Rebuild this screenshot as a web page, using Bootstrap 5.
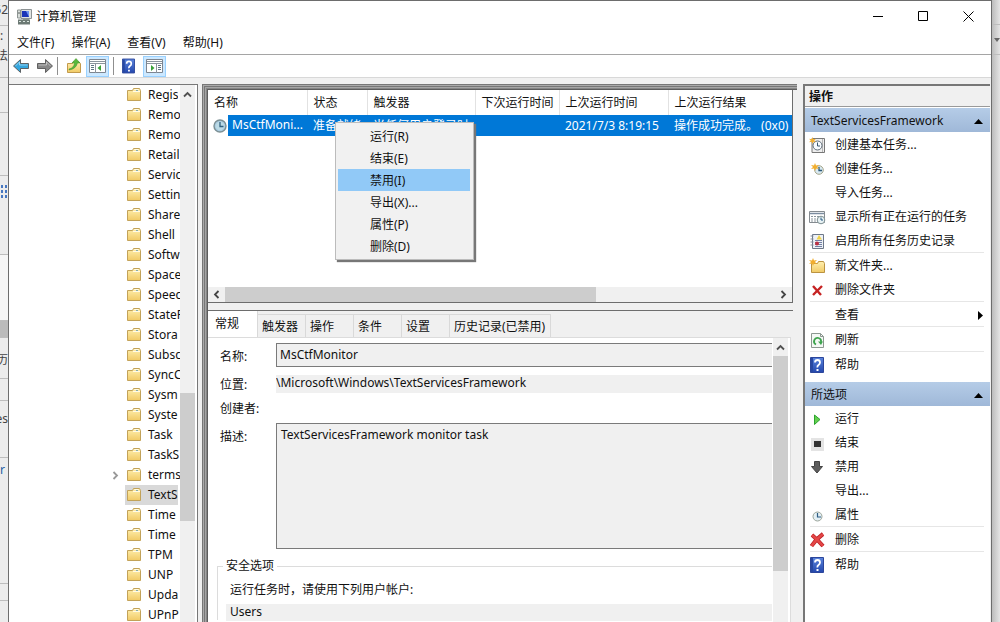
<!DOCTYPE html>
<html lang="zh-CN">
<head>
<meta charset="utf-8">
<meta name="viewport" content="width=device-width, initial-scale=1">
<title>计算机管理</title>
<link href="https://cdn.jsdelivr.net/npm/bootstrap@5.3.0/dist/css/bootstrap.min.css" rel="stylesheet">
<style>
  body { font-family: "Noto Sans", "Noto Sans CJK SC", sans-serif; font-size: 12px; line-height: 20px; color: #111; background: #e9e9e9; }
  button, input, textarea { font: inherit; color: inherit; border-radius: 0; }
  button { background: none; border: 0; padding: 0; text-align: left; }
  svg { display: block; flex: none; }
  a { color: inherit; text-decoration: none; }

  .desk-edge { width: 8px; flex: none; background: #ececec; white-space: nowrap; }
  .desk-edge > div { border-bottom: 1px solid #bdbdbd; overflow: hidden; flex: none; color: #444; }
  .desk-right { background: linear-gradient(90deg, #bcbcbc, #e4e4e4); }

  .app-window { background: #fff; border: 1px solid #6d6d6d; border-bottom: 0; min-width: 0; }
  .title-bar { height: 31px; }
  .win-btn { width: 45px; height: 29px; display: grid; place-items: center; }
  .menu-bar { height: 23px; padding-left: 8px; border-bottom: 1px solid #a5a5a5; gap: 17px; line-height: 22px; }
  .tool-bar { height: 23px; border-bottom: 1px solid #d8d8d8; padding-left: 4px; }
  .tool-btn { width: 23px; height: 21px; display: grid; place-items: center; }
  .tool-btn.on { background: #cce8ff; border: 1px solid #99d1ff; }
  .tool-sep { width: 1px; height: 18px; background: #8f8f8f; }
  .work-area { background: #f0f0f0; padding-top: 6px; min-height: 0; }

  .tree-pane { width: 189px; flex: none; background: #fff; border-top: 1px solid #777; border-right: 1px solid #777; margin-right: 4px; }
  .tree-list { width: 171px; }
  .tree-item { height: 20px; margin-left: 99px; white-space: nowrap; overflow: hidden; }
  .tree-item .arrow { width: 17px; flex: none; padding-left: 4px; }
  .tree-item .label-box { height: 20px; flex: 1; gap: 7px; padding-left: 2px; overflow: hidden; }
  .tree-item.chosen .label-box { background: #d9d9d9; }
  .vscroll { width: 15px; flex: none; background: #f0f0f0; }
  .vscroll .cap { height: 18px; display: grid; place-items: center; }
  .thumb { background: #cdcdcd; }
  .tree-thumb { height: 128px; margin-top: 290px; }

  .center-pane { min-width: 0; padding: 6px 4px 0 6px;
    box-shadow: inset 1px 1px #777, inset 2px 2px #aaa, inset 3px 3px #777, inset 4px 4px #a5a5a5, inset 5px 5px #858585, inset 6px 6px #5d5d5d; }
  .list-box { background: #fff; height: 213px; border-right: 1px solid #6d6d6d; border-bottom: 1px solid #6d6d6d; flex: none; }
  .task-table { width: 100%; table-layout: fixed; border-collapse: collapse; white-space: nowrap; }
  .task-table th { font-weight: 400; height: 25px; padding: 0 0 0 6px; border-right: 1px solid #e2e2e2; overflow: hidden; }
  .task-table th:last-child { border-right: 0; }
  .task-table td { height: 21px; padding: 0 0 0 6px; background: #0078d7; color: #fff; overflow: hidden; }
  .task-table td:first-child { padding: 0; }
  .task-icon { width: 20px; height: 21px; padding-left: 4px; background: #fff; display: grid; place-items: center; }
  .hscroll { height: 15px; background: #f0f0f0; }
  .hscroll .cap { width: 17px; display: grid; place-items: center; }
  .hscroll .thumb { flex: 0 0 371px; }
  .ctx-menu { position: absolute; left: 127px; top: 32px; width: 139px; height: 138px; padding: 2px 3px 2px 2px; background: #f1f1f1; border: 1px solid #bcbcbc; box-shadow: 2px 2px 1px #777; z-index: 5; }
  .ctx-menu button { display: block; width: 100%; height: 22px; line-height: 21px; padding-left: 32px; }
  .ctx-menu .hot { background: #91c9f7; }

  .detail-pane { background: #f0f0f0; border-top: 1px solid #6d6d6d; min-height: 0; }
  .splitter { height: 7px; background: #f0f0f0; flex: none; }
  .tab-row { height: 26px; padding-top: 3px; }
  .tab-row button { height: 23px; line-height: 21px; padding: 0 5px 0 4px; border: 1px solid #d9d9d9; border-left: 0; border-bottom: 0; white-space: nowrap; flex: none; width: 48px; }
  .tab-row button.current { background: #fff; width: 50px; height: 26px; margin-top: -3px; padding-left: 7px; line-height: 20px; border-top: 0; }
  .tab-page { background: #fff; border: 1px solid #dcdcdc; border-left: 0; border-bottom: 0; min-height: 0; margin-right: 2px; }
  .form-area { min-width: 0; padding-top: 5px; }
  .f-row { display: flex; }
  .f-row label { width: 68px; flex: none; padding-left: 12px; }
  .f-field { flex: 1; min-width: 0; background: #f0f0f0; border: 1px solid #7a7a7a; border-right: 0; outline: 0; padding: 0 4px; resize: none; display: block; }
  #fName { padding: 0 3px 2px; }
  #fDesc { padding-top: 1px; }
  .f-flat { border: 0; padding: 0 0 2px; }
  .sec-group { border: 1px solid #dcdcdc; border-right: 0; border-bottom: 0; margin-left: 9px; margin-top: 7px; padding-left: 8px; height: 64px; }
  .sec-group legend { float: none; font-size: 12px; line-height: 20px; width: auto; margin: 0 0 4px -3px; padding: 0 3px; }
  .detail-scroll { margin-right: 2px; margin-left: 1px; }
  .detail-thumb { height: 215px; }

  .action-pane { width: 187px; flex: none; margin-left: 6px; margin-right: 1px; background: #fff; border-left: 2px solid #777; border-top: 2px solid #777; }
  .pane-head { height: 21px; background: #f0f0f0; border-bottom: 1px solid #999; padding-left: 4px; padding-top: 1px; font-weight: 700; margin-bottom: 1px; }
  .sect-head { height: 24px; padding: 2px 7px 0 6px; width: 100%; background: linear-gradient(#b5cce7, #9fb8d8); }
  .act { height: 24px; width: 100%; gap: 9px; padding: 2px 7px 0 4px; display: flex; align-items: center; }
  .act .ico { width: 17px; height: 17px; flex: none; }
  .act-line { height: 1px; background: #e6e6e6; margin: 0 6px 0 5px; }
</style>
</head>
<body class="vh-100 overflow-hidden">
<svg width="0" height="0" class="position-absolute">
  <defs>
    <linearGradient id="gFold" x2="0" y2="1"><stop stop-color="#fff0b0"/><stop offset="1" stop-color="#f1ca65"/></linearGradient>
    <linearGradient id="gHelp" x2="0" y2="1"><stop stop-color="#5b84dc"/><stop offset="1" stop-color="#2347ad"/></linearGradient>
    <symbol id="folder" viewBox="0 0 14 14"><path d="M.5 2.500h5l1-2h6l1 2v10H.5z" fill="url(#gFold)" stroke="#c2a259"/><path d="M6 3.500h7M7.500 1.500h4" stroke="#fffbe8"/><path d="M9 2.500h2" stroke="#8aa"/></symbol>
    <symbol id="help" viewBox="0 0 14 16"><path d="M.5.5h13v15H.5z" fill="url(#gHelp)" stroke="#2c469b"/><path d="M1 1h2v14H1z" fill="#2748a2"/><path d="M5 5.500Q5 3 7.500 3T10 5.500Q10 7 8.500 8T7.500 10.500" fill="none" stroke="#fff" stroke-width="1.800"/><path d="M6.500 12h2v2h-2z" fill="#fff"/></symbol>
    <symbol id="clock" viewBox="0 0 14 14"><circle cx="7" cy="7" r="6" fill="#a9cbe0" stroke="#7b8f94" stroke-width="1.400"/><circle cx="7" cy="7" r="4.300" fill="#bcdbe6"/><path d="M7 3v4.500h3.500" fill="none" stroke="#32617f" stroke-width="1.300"/></symbol>
    <symbol id="chevUp" viewBox="0 0 9 7"><path d="M1 5.500 4.500 2 8 5.500" fill="none" stroke="#505050" stroke-width="1.800"/></symbol>
    <symbol id="chevRight" viewBox="0 0 7 9"><path d="M1.500 1 5 4.500 1.500 8" fill="none" stroke="currentColor" stroke-width="1.800"/></symbol>
    <symbol id="arrowR" viewBox="0 0 16 14"><path d="M.5 4.500h8v-4l7 6.500-7 6.500v-4h-8z" fill="currentColor" stroke="#555" stroke-width=".9"/><path d="M1.500 6h8V3l4 4" fill="none" stroke="#fff" stroke-opacity=".45"/></symbol>
    <symbol id="spark" viewBox="0 0 8 8"><path d="M4 0 5 2.500 8 2 6 4l2 2-3-.5L4 8 3 5.500 0 6l2-2-2-2 3 .5z" fill="#f2ae2e"/></symbol>
  </defs>
</svg>

<div class="d-flex h-100">
  <div class="desk-edge d-flex flex-column overflow-hidden" aria-hidden="true">
    <div class="d-flex justify-content-end" style="height:26px">62</div>
    <div style="height:52px"><div>:</div><div class="d-flex justify-content-end">法</div></div>
    <div style="height:35px"></div>
    <div style="height:63px"></div>
    <div style="height:79px;padding-top:8px"><svg width="8" height="16"><path d="M2 1v14M6 1v14" stroke="#4777c0" stroke-width="2" stroke-dasharray="3 2"/></svg></div>
    <div style="height:66px;background:#f6f6f6"></div>
    <div style="height:17px;background:#bbb"></div>
    <div class="d-flex justify-content-end" style="height:41px;padding-top:12px">历</div>
    <div style="height:22px"></div>
    <div class="d-flex justify-content-end" style="height:57px;padding-top:8px">es</div>
    <div style="height:126px;padding-top:2px;color:#245fa5">r</div>
    <div style="height:17px"></div>
  </div>

  <div class="app-window flex-grow-1 d-flex flex-column">
    <header class="title-bar d-flex align-items-center flex-shrink-0">
      <svg class="ms-2" width="15" height="16" viewBox="0 0 15 16"><path d="M4 .5h10.500v9H4z" fill="#dfe3e2" stroke="#8c9294"/><path d="M5 2h7v6H5z" fill="#1c35b8"/><path d="M9 2h3v6z" fill="#6f95f0"/><path d="M.5 1h3v8h-3z" fill="#d9dedb" stroke="#8d9492"/><path d="M1 4h2" stroke="#58615f"/><path d="M6 10h6v2H6z" fill="#a3aba7"/><path d="M1 10.500h12v5H1z" fill="#6c7974"/><path d="M2 12.500h2m2 0h2m2 0h2" stroke="#d9e5df"/></svg>
      <span class="ps-1 flex-grow-1">计算机管理</span>
      <button class="win-btn" aria-label="最小化"><svg width="11" height="11"><path d="M0 5.500h10" stroke="#000"/></svg></button>
      <button class="win-btn" aria-label="最大化"><svg width="11" height="11"><path d="M.5.500h9v9h-9z" fill="none" stroke="#000"/></svg></button>
      <button class="win-btn" aria-label="关闭"><svg width="11" height="11"><path d="m.5.500 10 10m0-10-10 10" stroke="#000"/></svg></button>
    </header>
    <nav class="menu-bar d-flex flex-shrink-0">
      <button>文件(F)</button><button>操作(A)</button><button>查看(V)</button><button>帮助(H)</button>
    </nav>
    <div class="tool-bar d-flex align-items-center flex-shrink-0">
      <button aria-label="后退"><svg width="16" height="14" style="color:#35a6de"><g transform="translate(16 0) scale(-1 1)"><use href="#arrowR"/></g></svg></button>
      <button class="ms-2" aria-label="前进"><svg width="16" height="14" style="color:#888"><use href="#arrowR"/></svg></button>
      <span class="tool-sep ms-1 me-2"></span>
      <button class="me-1" aria-label="上一级"><svg width="16" height="16" viewBox="0 0 16 16"><path d="M1.500 5.500h5l1-2h5l2 2v9h-13z" fill="url(#gFold)" stroke="#c29a4c"/><path d="M3 11Q8 10 8.500 5H6l4-4.500L14 5h-2.500Q10 11 3 12z" fill="#59b83c" stroke="#40912b" stroke-width=".5"/></svg></button>
      <button class="tool-btn on" aria-label="显示或隐藏控制台树"><svg width="17" height="14" viewBox="0 0 17 14"><path d="M.5.500h16v13H.5z" fill="#fff" stroke="#7d8590"/><path d="M1 2.500h15M1 4.500h15M6.500 5v9" stroke="#8b949d"/><path d="M2 6.500h3m-3 2h3m-3 2h3" stroke="#5f7482"/><path d="m12 6-3.500 3 3.500 3z" fill="#39a238"/></svg></button>
      <span class="tool-sep ms-1 me-2"></span>
      <button aria-label="帮助"><svg width="13" height="16"><use href="#help"/></svg></button>
      <button class="tool-btn on ms-2" aria-label="显示或隐藏操作窗格"><svg width="17" height="14" viewBox="0 0 17 14"><path d="M.5.500h16v13H.5z" fill="#fff" stroke="#7d8590"/><path d="M1 2.500h15M1 4.500h15M10.500 5v9" stroke="#8b949d"/><path d="M12 6.500h3m-3 2h3m-3 2h3" stroke="#5f7482"/><path d="m5 6 3.500 3L5 12z" fill="#39a238"/></svg></button>
    </div>

    <main class="work-area flex-grow-1 d-flex">
      <aside class="tree-pane d-flex overflow-hidden">
        <div class="tree-list overflow-hidden" id="tree"></div>
        <div class="vscroll"><div class="cap"><svg width="9" height="7"><use href="#chevUp"/></svg></div><div class="thumb tree-thumb"></div></div>
      </aside>

      <section class="center-pane flex-grow-1 d-flex flex-column">
        <div class="list-box position-relative d-flex flex-column">
          <table class="task-table">
            <colgroup><col style="width:99px"><col style="width:60px"><col style="width:108px"><col style="width:84px"><col style="width:109px"><col></colgroup>
            <thead><tr><th>名称</th><th>状态</th><th>触发器</th><th>下次运行时间</th><th>上次运行时间</th><th>上次运行结果</th></tr></thead>
            <tbody><tr>
              <td><div class="d-flex"><span class="task-icon"><svg width="14" height="14"><use href="#clock"/></svg></span><span class="ps-1">MsCtfMoni...</span></div></td>
              <td>准备就绪</td><td>当任何用户登录时</td><td></td><td>2021/7/3 8:19:15</td><td>操作成功完成。 (0x0)</td>
            </tr></tbody>
          </table>
          <div class="hscroll d-flex mt-auto">
            <div class="cap"><svg width="7" height="9"><g transform="rotate(180 3.500 4.500)" color="#444"><use href="#chevRight"/></g></svg></div>
            <div class="thumb"></div>
            <div class="cap ms-auto"><svg width="7" height="9" color="#444"><use href="#chevRight"/></svg></div>
          </div>
          <div class="ctx-menu">
            <button>运行(R)</button><button>结束(E)</button><button class="hot">禁用(I)</button><button>导出(X)...</button><button>属性(P)</button><button>删除(D)</button>
          </div>
        </div>
        <div class="splitter"></div>
        <div class="detail-pane flex-grow-1 d-flex flex-column">
          <div class="tab-row d-flex flex-shrink-0">
            <button class="current">常规</button><button>触发器</button><button>操作</button><button>条件</button><button>设置</button><button class="w-auto">历史记录(已禁用)</button>
          </div>
          <div class="tab-page d-flex flex-grow-1 overflow-hidden">
            <form class="form-area flex-grow-1">
              <div class="f-row mb-2"><label for="fName" class="pt-1">名称:</label><input id="fName" class="f-field" style="height:24px" value="MsCtfMonitor" readonly></div>
              <div class="f-row mb-1"><label for="fLoc">位置:</label><input id="fLoc" class="f-field f-flat" style="height:18px" value="\Microsoft\Windows\TextServicesFramework" readonly></div>
              <div class="f-row mb-1"><span class="ps-2 ms-1">创建者:</span></div>
              <div class="f-row"><label for="fDesc" class="pt-1">描述:</label><textarea id="fDesc" class="f-field" style="height:126px" readonly>TextServicesFramework monitor task</textarea></div>
              <fieldset class="sec-group">
                <legend>安全选项</legend>
                <label for="fUser" class="d-block mb-1 ps-1">运行任务时，请使用下列用户帐户:</label>
                <input id="fUser" class="f-field f-flat w-100 ps-1" style="height:17px" value="Users" readonly>
              </fieldset>
            </form>
            <div class="vscroll detail-scroll"><div class="cap"><svg width="9" height="7"><use href="#chevUp"/></svg></div><div class="thumb detail-thumb"></div></div>
          </div>
        </div>
      </section>

      <aside class="action-pane overflow-hidden">
        <div class="pane-head">操作</div>
        <button class="sect-head d-flex align-items-center justify-content-between">TextServicesFramework<svg width="9" height="5"><path d="M4.500 0 9 5H0z" fill="#000"/></svg></button>
        <button class="act"><svg class="ico" viewBox="0 0 17 17"><path d="M3 1.500h12.500v14H3z" fill="#eee" stroke="#777"/><path d="M13.500 2v13" stroke="#b5b5b5"/><circle cx="8.500" cy="8.500" r="4.500" fill="#f7fbff" stroke="#5f6c77"/><path d="M8.500 5.500v3.500H11" fill="none" stroke="#38566d"/><use href="#spark" width="7" height="7"/></svg>创建基本任务...</button>
        <button class="act"><svg class="ico" viewBox="0 0 17 17"><circle cx="10" cy="9" r="4.300" fill="#d8e9f1" stroke="#a6a58a"/><path d="M10 6v3.500h3" fill="none" stroke="#2b5878" stroke-width="1.300"/><use href="#spark" x="2" y="2" width="8" height="8"/></svg>创建任务...</button>
        <button class="act"><span class="ico"></span>导入任务...</button>
        <button class="act"><svg class="ico" viewBox="0 0 17 17"><path d="M.5 2.500h15v11H.5z" fill="#fff" stroke="#858b90"/><path d="M1 4.500h14" stroke="#7c8da0" stroke-width="1.500"/><path d="M2 7.500h2m1 0h2m1 0h2M2 10h2m1 0h2M2 12h2m1 0h2" stroke="#8c979e"/><circle cx="12" cy="11" r="3.800" fill="#e8f2f4" stroke="#7d8e91"/><path d="M12 8.500V11h2" fill="none" stroke="#245782"/></svg>显示所有正在运行的任务</button>
        <button class="act"><svg class="ico" viewBox="0 0 17 17"><path d="M3.500 1.500h11v14h-11z" fill="#edf1f6" stroke="#6d7889"/><path d="M1.500 3h3m-3 3h3m-3 3h3m-3 3h3" stroke="#858b9a"/><path d="M6 7.500h7m-7 2h7m-7 2h7m-7 2h7" stroke="#7380a4"/><path d="m10 2 3 4.500H7.500z" fill="#f1d247"/><circle cx="8" cy="10.500" r="2" fill="#bd3044"/></svg>启用所有任务历史记录</button>
        <div class="act-line"></div>
        <button class="act"><svg class="ico" viewBox="0 0 17 17"><path d="M2.500 5.500h6l1-2h5l1 2v9h-13z" fill="url(#gFold)" stroke="#bb9341"/><use href="#spark" width="8" height="8"/></svg>新文件夹...</button>
        <button class="act"><svg class="ico" viewBox="0 0 17 17"><path d="m4 4 8 9m1-9-9 9" stroke="#c62323" stroke-width="2.400"/></svg>删除文件夹</button>
        <div class="act-line"></div>
        <button class="act"><span class="ico"></span><span class="flex-grow-1">查看</span><svg width="5" height="9"><path d="m0 0 5 4.500L0 9z" fill="#000"/></svg></button>
        <div class="act-line"></div>
        <button class="act"><svg class="ico" viewBox="0 0 17 17"><path d="M2.500 1.500h9l3 3v11h-12z" fill="#f4f8f5" stroke="#8c9790"/><path d="M11.500 1.500v3h3" fill="none" stroke="#8c9790"/><path d="M7 12.500A3.500 3.500 0 1 1 12 10" fill="none" stroke="#3da34d" stroke-width="1.800"/><path d="M9 9.500h5L12 13z" fill="#3da34d"/></svg>刷新</button>
        <div class="act-line"></div>
        <button class="act"><svg class="ico" viewBox="0 0 17 17"><use href="#help" x="1" y="0" width="14" height="16"/></svg>帮助</button>
        <button class="sect-head d-flex align-items-center justify-content-between" style="margin-top:6px">所选项<svg width="9" height="5"><path d="M4.500 0 9 5H0z" fill="#000"/></svg></button>
        <button class="act"><svg class="ico" viewBox="0 0 17 17"><path d="m5.500 4 5.500 4.500-5.500 5z" fill="#64cf50" stroke="#2ca42d"/></svg>运行</button>
        <button class="act"><svg class="ico" viewBox="0 0 17 17"><path d="M2 3h13v13H2z" fill="#e4e4e4"/><path d="M5 6h7v6H5z" fill="#333"/></svg>结束</button>
        <button class="act"><svg class="ico" viewBox="0 0 17 17"><path d="M5.500 2.500h5v5h3L8 14 2.500 7.500h3z" fill="#5d5d5d" stroke="#444"/></svg>禁用</button>
        <button class="act"><span class="ico"></span>导出...</button>
        <button class="act"><svg class="ico" viewBox="0 0 17 17"><circle cx="8.500" cy="9.500" r="4.500" fill="#e3eff4" stroke="#9ca59a"/><path d="M8.500 6v4H12" fill="none" stroke="#2d5d83" stroke-width="1.200"/></svg>属性</button>
        <div class="act-line"></div>
        <button class="act"><svg class="ico" viewBox="0 0 17 17"><path d="M3 3q5 4 11 11M14 2Q7 7 2.500 14" fill="none" stroke="#b91f24" stroke-width="4"/><path d="M3 3q5 4 11 11M14 2Q7 7 2.500 14" fill="none" stroke="#e44646" stroke-width="2.600"/></svg>删除</button>
        <div class="act-line"></div>
        <button class="act"><svg class="ico" viewBox="0 0 17 17"><use href="#help" x="1" y="0" width="14" height="16"/></svg>帮助</button>
      </aside>
    </main>
  </div>
  <div class="desk-edge desk-right d-flex flex-column" aria-hidden="true">
    <div style="height:25px"></div>
    <div style="height:30px;padding-top:13px"><svg width="8" height="5"><path d="M2 0h6L5 4z" fill="#666"/></svg></div>
  </div>
</div>

<script src="https://cdn.jsdelivr.net/npm/bootstrap@5.3.0/dist/js/bootstrap.bundle.min.js"></script>
<script>
  const names = ['Regis', 'Remo', 'Remo', 'Retail', 'Servic', 'Settin', 'Share', 'Shell', 'Softw', 'Space', 'Speec', 'StateR', 'Stora', 'Subsc', 'SyncC', 'Sysm', 'Syste', 'Task', 'TaskS', 'terms', 'TextS', 'Time', 'Time', 'TPM', 'UNP', 'Upda', 'UPnP'];
  document.getElementById('tree').innerHTML = names.map((n, i) =>
    `<button class="tree-item d-flex align-items-center ${i === 20 ? 'chosen' : ''}">
       <span class="arrow">${n === 'terms' ? '<svg width="7" height="9" color="#999"><use href="#chevRight"/></svg>' : ''}</span>
       <span class="label-box d-flex align-items-center"><svg width="14" height="14"><use href="#folder"/></svg><span>${n}</span></span>
     </button>`).join('');
</script>
</body>
</html>
